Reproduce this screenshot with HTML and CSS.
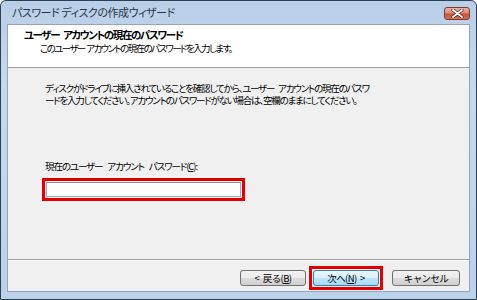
FILE: index.html
```html
<!DOCTYPE html>
<html lang="ja">
<head>
    <meta charset="UTF-8">
    <title>パスワード ディスクの作成ウィザード</title>
    <link rel="stylesheet" href="styles.css">
</head>
<body>
    <div class="window">
        <!-- Title bar -->
        <div class="titlebar">
            <span class="title">パスワード ディスクの作成ウィザード</span>
            <button class="close-btn" aria-label="閉じる">
                <svg width="13" height="9" viewBox="0 0 13 9">
                    <path d="M2 1 L11 8 M11 1 L2 8" stroke="#5a2018" stroke-width="3.2" stroke-linecap="round"/>
                    <path d="M2 1 L11 8 M11 1 L2 8" stroke="#ffffff" stroke-width="1.8" stroke-linecap="round"/>
                </svg>
            </button>
        </div>

        <div class="content">
            <!-- Wizard header -->
            <div class="wizard-header">
                <div class="header-title">ユーザー アカウントの現在のパスワード</div>
                <div class="header-sub">このユーザー アカウントの現在のパスワードを入力します。</div>
            </div>

            <!-- Wizard body -->
            <div class="wizard-body">
                <p class="intro">ディスクがドライブに挿入されていることを確認してから、ユーザー アカウントの現在のパスワ<br>ードを入力してください。アカウントのパスワードがない場合は、空欄のままにしてください。</p>
                <label class="field-label" for="pw">現在のユーザー アカウント パスワード(<u>C</u>):</label>
                <input class="field highlight" id="pw" type="password">
            </div>

            <!-- Wizard footer -->
            <div class="wizard-footer">
                <button class="btn">&lt; 戻る(<u>B</u>)</button>
                <span class="highlight"><button class="btn btn-default">次へ(<u>N</u>) &gt;</button></span>
                <button class="btn btn-cancel">キャンセル</button>
            </div>
        </div>
    </div>
</body>
</html>
```

FILE: styles.css
```css
body {
    margin: 0;
    padding: 0;
    font-family: "Noto Sans CJK JP", "Noto Sans", sans-serif;
    font-feature-settings: "palt";
    background: #ffffff;
}
.window {
    width: 477px;
    height: 300px;
    box-sizing: border-box;
    border: 1px solid #2c4154;
    border-radius: 6px 6px 0 0;
    background: linear-gradient(to bottom, #b9cfe7 0%, #c6d9ee 30%, #bcd1ea 100%);
    padding: 0 6px 7px 6px;
    display: flex;
    flex-direction: column;
}
.titlebar {
    height: 23px;
    display: flex;
    align-items: center;
    justify-content: space-between;
    padding-left: 5px;
}
.title {
    font-size: 11px;
    letter-spacing: -0.45px;
    color: #26364a;
    margin-top: -2px;
}
.close-btn {
    width: 26px;
    height: 13px;
    margin-top: 2px;
    padding: 0;
    border: 1px solid #7d3a30;
    border-radius: 3px;
    background: linear-gradient(to bottom, #eab3a6 0%, #dc8a78 45%, #c8523e 55%, #d2705a 100%);
    display: flex;
    align-items: center;
    justify-content: center;
}
.content {
    flex: 1;
    border: 1px solid #8fa6bf;
    background: #f0f0f0;
    display: flex;
    flex-direction: column;
}
.wizard-header {
    height: 43px;
    background: #ffffff;
    border-bottom: 1px solid #a0a0a0;
    box-sizing: border-box;
    padding: 4px 0 0 16px;
    line-height: 12px;
    color: #000;
}
.header-title {
    font-weight: bold;
    font-size: 10.5px;
    letter-spacing: -1.4px;
    word-spacing: 3px;
}
.header-sub {
    padding-left: 16px;
    margin-top: 1px;
    font-size: 9.5px;
    letter-spacing: -1.6px;
    word-spacing: 1px;
}
.wizard-body {
    flex: 1;
    border-bottom: 1px solid #a0a0a0;
    padding: 14px 0 0 37px;
    font-size: 9.5px;
    line-height: 12px;
    color: #000;
    display: flex;
    flex-direction: column;
    align-items: flex-start;
}
.intro {
    margin: 0;
    letter-spacing: -1.2px;
    word-spacing: 3px;
}
.field-label {
    margin-top: 54px;
    line-height: 12px;
    letter-spacing: -1.1px;
    word-spacing: 4px;
}
.field {
    margin: 10px 0 0 1px;
    width: 195px;
    height: 15px;
    box-sizing: border-box;
    border: 1px solid #abadb3;
    border-top-color: #8e8f8f;
    background: #ffffff;
    padding: 0;
}
.highlight {
    outline: 3px solid #e10000;
    outline-offset: 1px;
}
.wizard-footer {
    height: 31px;
    box-sizing: border-box;
    border-top: 1px solid #ffffff;
    padding: 9px 9px 0 0;
    display: flex;
    justify-content: flex-end;
    align-items: flex-start;
    gap: 7px;
}
.wizard-footer .highlight {
    display: flex;
}
.btn {
    width: 66px;
    height: 16px;
    padding: 0;
    border: 1px solid #707070;
    border-radius: 3px;
    background: linear-gradient(to bottom, #f2f2f2 0%, #ebebeb 50%, #dddddd 50%, #cfcfcf 100%);
    font-family: inherit;
    font-size: 9.5px;
    letter-spacing: -0.6px;
    word-spacing: 2px;
    line-height: 12px;
    color: #000;
}
.btn-default {
    border-color: #3c7fb1;
    background: linear-gradient(to bottom, #eaf6fd 0%, #d9f0fc 50%, #bee6fd 50%, #a7d9f5 100%);
}
.btn-cancel {
    width: 68px;
    margin-left: 6px;
}
```
